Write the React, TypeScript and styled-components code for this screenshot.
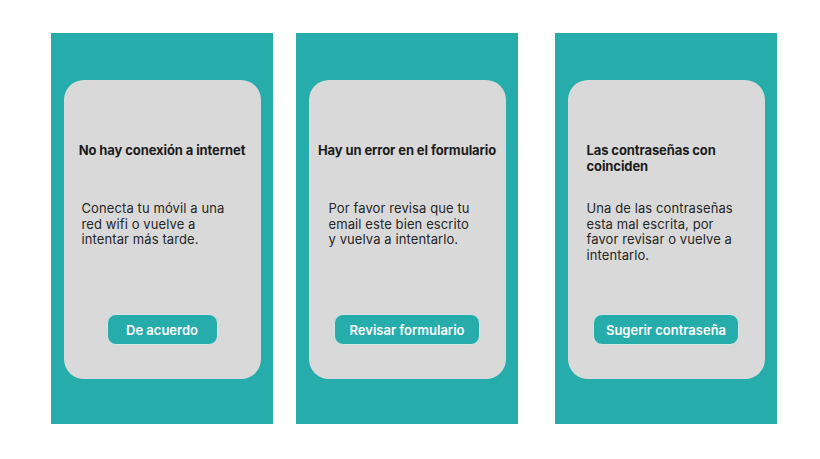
import React from "react";
import styled, { createGlobalStyle } from "styled-components";

const GlobalStyle = createGlobalStyle`
  html, body {
    margin: 0;
    padding: 0;
    background: #ffffff;
  }
  body {
    font-family: Inter, "Noto Sans", "Liberation Sans", sans-serif;
  }
`;

const Page = styled.div`
  width: 820px;
  height: 459px;
  display: flex;
  align-items: flex-start;
  padding: 33px 0 0 51px;
  box-sizing: border-box;
`;

const Panel = styled.div<{ $offset: number }>`
  flex: 0 0 auto;
  width: 222px;
  height: 391px;
  margin-left: ${({ $offset }) => $offset}px;
  background: #26adab;
  display: flex;
  justify-content: center;
  padding-top: 47px;
  box-sizing: border-box;
`;

const Card = styled.div`
  width: 197px;
  height: 299px;
  background: #d9d9d9;
  border-radius: 20px;
  display: flex;
  flex-direction: column;
  padding: 62px 0 34px;
  box-sizing: border-box;
`;

const Title = styled.h2<{ $left: boolean }>`
  margin: 0;
  height: 59px;
  padding: ${({ $left }) => ($left ? "0 0 0 19px" : "0")};
  font-size: 13px;
  line-height: 16px;
  font-weight: 700;
  letter-spacing: -0.1px;
  color: #1c1c1c;
  text-align: ${({ $left }) => ($left ? "left" : "center")};
`;

const Body = styled.p<{ $inset: number }>`
  margin: 0;
  flex: 1;
  padding-left: ${({ $inset }) => $inset}px;
  font-size: 13px;
  line-height: 15.5px;
  font-weight: 400;
  letter-spacing: 0.1px;
  color: #262626;
`;

const Line = styled.span`
  display: block;
  white-space: nowrap;
`;

const Action = styled.button<{ $width: number }>`
  align-self: center;
  width: ${({ $width }) => $width}px;
  height: 31px;
  border: 1px solid #d2e6e5;
  border-radius: 9px;
  background: #26adab;
  color: #ffffff;
  font-family: inherit;
  font-size: 13px;
  font-weight: 600;
  padding: 0;
  cursor: pointer;
`;

type Dialog = {
  offset: number;
  title: string[];
  leftTitle: boolean;
  body: string[];
  inset: number;
  action: string;
  actionWidth: number;
};

const dialogs: Dialog[] = [
  {
    offset: 0,
    title: ["No hay conexión a internet"],
    leftTitle: false,
    body: ["Conecta tu móvil a una", "red wifi o vuelve a", "intentar más tarde."],
    inset: 18,
    action: "De acuerdo",
    actionWidth: 111,
  },
  {
    offset: 23,
    title: ["Hay un error en el formulario"],
    leftTitle: false,
    body: ["Por favor revisa que tu", "email este bien escrito", "y vuelva a intentarlo."],
    inset: 20,
    action: "Revisar formulario",
    actionWidth: 146,
  },
  {
    offset: 37,
    title: ["Las contraseñas con", "coinciden"],
    leftTitle: true,
    body: ["Una de las contraseñas", "esta mal escrita, por", "favor revisar o vuelve a", "intentarlo."],
    inset: 19,
    action: "Sugerir contraseña",
    actionWidth: 146,
  },
];

const App: React.FC = () => (
  <>
    <GlobalStyle />
    <Page>
      {dialogs.map(d => (
        <Panel key={d.action} $offset={d.offset}>
          <Card>
            <Title $left={d.leftTitle}>
              {d.title.map(t => (
                <Line key={t}>{t}</Line>
              ))}
            </Title>
            <Body $inset={d.inset}>
              {d.body.map(l => (
                <Line key={l}>{l}</Line>
              ))}
            </Body>
            <Action $width={d.actionWidth}>{d.action}</Action>
          </Card>
        </Panel>
      ))}
    </Page>
  </>
);

export default App;
